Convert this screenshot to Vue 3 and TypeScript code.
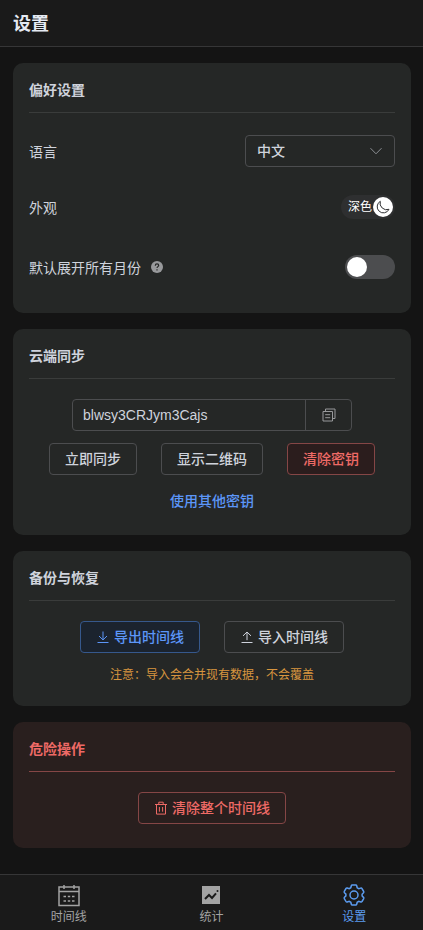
<script setup lang="ts">
import { ref } from 'vue'

type TabId = 'timeline' | 'stats' | 'settings'

const language = ref('zh')
const dark = ref(true)
const expandAll = ref(false)
const secret = ref('blwsy3CRJym3Cajs')
const active = ref<TabId>('settings')

const tabs: { id: TabId; label: string }[] = [
  { id: 'timeline', label: '时间线' },
  { id: 'stats', label: '统计' },
  { id: 'settings', label: '设置' },
]
</script>

<template>
  <div class="page">
    <header class="header">
      <h1>设置</h1>
    </header>

    <main class="content">
      <section class="card">
        <h2>偏好设置</h2>
        <div class="rows">
          <div class="row first">
            <label for="language">语言</label>
            <div class="select">
              <select id="language" v-model="language">
                <option value="zh">中文</option>
                <option value="en">English</option>
              </select>
              <svg viewBox="0 0 14 14" aria-hidden="true"><path d="M1.500 4.200 7 9.800l5.500-5.600" /></svg>
            </div>
          </div>
          <div class="row">
            <label for="appearance">外观</label>
            <div class="theme">
              <input id="appearance" v-model="dark" type="checkbox" role="switch" />
              <span class="theme-text">{{ dark ? '深色' : '浅色' }}</span>
              <span class="theme-knob">
                <svg viewBox="0 0 14 14" aria-hidden="true">
                  <path d="M4.300 1.300A6.200 6.200 0 1 0 13 9.300 6.600 6.600 0 0 1 4.300 1.300Z" />
                </svg>
              </span>
            </div>
          </div>
          <div class="row">
            <div class="label-group">
              <label for="expand">默认展开所有月份</label>
              <svg class="help" viewBox="0 0 12 12" aria-hidden="true">
                <circle cx="6" cy="6" r="6" />
                <path d="M4.300 4.700c0-1.100.7-1.800 1.700-1.800s1.700.7 1.700 1.600c0 1.100-1.700 1.200-1.700 2.500" />
                <path d="M6 8.200v1.200" />
              </svg>
            </div>
            <input id="expand" v-model="expandAll" class="switch" type="checkbox" role="switch" />
          </div>
        </div>
      </section>

      <section class="card">
        <h2>云端同步</h2>
        <div class="body sync">
          <div class="key">
            <input v-model="secret" type="text" aria-label="密钥" />
            <button type="button" aria-label="复制">
              <svg viewBox="0 0 14 14" aria-hidden="true">
                <path d="M1 3.500h9.500V13H1zM3.500 1H13v9.500h-2.500M3.500 1v2.500M3.200 6.700h5M3.200 9.700h5" />
              </svg>
            </button>
          </div>
          <div class="actions">
            <button type="button" class="btn">立即同步</button>
            <button type="button" class="btn">显示二维码</button>
            <button type="button" class="btn danger filled">清除密钥</button>
          </div>
          <button type="button" class="link">使用其他密钥</button>
        </div>
      </section>

      <section class="card">
        <h2>备份与恢复</h2>
        <div class="body backup">
          <div class="actions">
            <button type="button" class="btn primary">
              <svg viewBox="0 0 14 14" aria-hidden="true"><path d="M7 1.500v8.200M3 6l4 3.900L11 6M1.500 12.500h11" /></svg>
              导出时间线
            </button>
            <button type="button" class="btn">
              <svg viewBox="0 0 14 14" aria-hidden="true"><path d="M7 10.200V2M3 5.900 7 2l4 3.900M1.500 12.500h11" /></svg>
              导入时间线
            </button>
          </div>
          <p class="note">注意：导入会合并现有数据，不会覆盖</p>
        </div>
      </section>

      <section class="card danger-zone">
        <h2>危险操作</h2>
        <div class="body">
          <button type="button" class="btn danger">
            <svg viewBox="0 0 14 14" aria-hidden="true">
              <path d="M1 3.500h12M2.500 3.500v9.600h9V3.500M4.800 3.300V1.200h4.400v2.100M5.400 6v4.700M8.600 6v4.700" />
            </svg>
            清除整个时间线
          </button>
        </div>
      </section>
    </main>

    <nav class="tabs">
      <button
        v-for="tab in tabs"
        :key="tab.id"
        type="button"
        :class="['tab', { active: active === tab.id }]"
        @click="active = tab.id"
      >
        <svg v-if="tab.id === 'timeline'" viewBox="0 0 24 24" aria-hidden="true">
          <path d="M2 4h20v18.500H2zM2 8.500h20M7 2v4M17 2v4M6.500 13.500H9M10.800 13.500h2.400M15 13.500h2.500M6.500 18H9M10.800 18h2.400M15 18h2.500" />
        </svg>
        <svg v-else-if="tab.id === 'stats'" viewBox="0 0 24 24" aria-hidden="true">
          <path class="solid" d="M3 3h18v18H3z" />
          <path class="trend" d="m6 16 4-4 3 3 4-4.700" />
          <circle class="peak" cx="18.500" cy="8" r="1" />
        </svg>
        <svg v-else viewBox="0 0 24 24" aria-hidden="true">
          <path d="M10.200 2h3.600q.7 0 .9.800l.5 2 1.600.9 2-.6q.8-.2 1.200.5l1.700 2.900q.4.700-.2 1.300l-1.400 1.400v1.800l1.400 1.400q.6.600.2 1.300L20 18.500q-.4.700-1.200.5l-2-.6-1.600.9-.5 2q-.2.800-.9.800h-3.600q-.7 0-.9-.8l-.5-2-1.600-.9-2 .6q-.8.200-1.200-.5l-1.700-2.900q-.4-.7.2-1.300l1.400-1.400v-1.800L2.500 9.700q-.6-.6-.2-1.300L4 5.500q.4-.7 1.200-.5l2 .6 1.600-.9.500-2q.2-.7.900-.7z" />
          <circle cx="12" cy="12" r="4" />
        </svg>
        <span>{{ tab.label }}</span>
      </button>
    </nav>
  </div>
</template>

<style>
body {
  margin: 0;
  background: #141414;
}
</style>

<style scoped>
.page {
  display: flex;
  flex-direction: column;
  min-height: 100vh;
  box-sizing: border-box;
  color: #cfd3dc;
  font-family: "Liberation Sans", "Noto Sans CJK SC", sans-serif;
  font-size: 14px;
  line-height: 22px;
}

button,
input,
select {
  box-sizing: border-box;
  margin: 0;
  font: inherit;
  color: inherit;
}

button {
  cursor: pointer;
}

svg {
  fill: none;
  stroke: currentColor;
}

.header {
  padding: 12px 13px 10px;
  background: #1a1a1a;
  border-bottom: 1px solid #363637;
}

h1 {
  margin: 0;
  font-size: 18px;
  line-height: 24px;
  color: #e5eaf3;
}

.content {
  flex: 1;
  display: flex;
  flex-direction: column;
  gap: 16px;
  padding: 16px 12px 26px 13px;
}

.card {
  padding: 16px;
  border-radius: 10px;
  background: #252726;
}

h2 {
  margin: 0;
  padding-bottom: 11px;
  border-bottom: 1px solid #3a3c3b;
  font-size: 14px;
  line-height: 22px;
}

.rows {
  padding-top: 12px;
}

.row {
  display: flex;
  align-items: center;
  justify-content: space-between;
  min-height: 60px;
}

.row.first {
  min-height: 52px;
}

.row label {
  line-height: 20px;
  padding-top: 2px;
}

.label-group {
  display: flex;
  align-items: center;
  gap: 10px;
}

.help {
  width: 12px;
  height: 12px;
}

.help circle {
  fill: #98999b;
  stroke: none;
}

.help path {
  stroke: #252726;
  stroke-width: 1.2;
}

.select {
  position: relative;
  width: 150px;
}

.select select {
  display: block;
  width: 100%;
  height: 32px;
  padding: 0 32px 0 11px;
  appearance: none;
  border: 1px solid #4c4d4f;
  border-radius: 4px;
  background: transparent;
  font-weight: 500;
}

.select option {
  background: #252726;
}

.select svg {
  position: absolute;
  top: 9px;
  right: 12px;
  width: 14px;
  height: 14px;
  color: #8d9095;
  pointer-events: none;
}

.theme {
  position: relative;
  display: flex;
  align-items: center;
  justify-content: space-between;
  box-sizing: border-box;
  width: 54px;
  height: 24px;
  padding: 0 2px 0 7px;
  border-radius: 12px;
  background: #2e2f30;
  color: #fff;
  font-size: 12px;
}

.theme input {
  position: absolute;
  inset: 0;
  width: 100%;
  height: 100%;
  opacity: 0;
  cursor: pointer;
}

.theme-knob {
  display: grid;
  place-items: center;
  width: 20px;
  height: 20px;
  border-radius: 50%;
  background: #fff;
  color: #303133;
}

.theme-knob svg {
  width: 14px;
  height: 14px;
}

.switch {
  display: flex;
  align-items: center;
  width: 50px;
  height: 24px;
  padding: 2px;
  appearance: none;
  border-radius: 12px;
  background: #4c4d4f;
  cursor: pointer;
}

.switch::before {
  content: "";
  width: 20px;
  height: 20px;
  border-radius: 50%;
  background: #fff;
}

.switch:checked {
  justify-content: flex-end;
  background: #409eff;
}

.body {
  display: flex;
  flex-direction: column;
  align-items: center;
  gap: 12px;
  padding: 20px 0 8px;
}

.body.sync,
.body.backup {
  padding-bottom: 4px;
}

.key {
  display: flex;
  box-sizing: border-box;
  width: 280px;
  max-width: 100%;
  height: 32px;
  border: 1px solid #4c4d4f;
  border-radius: 4px;
}

.key input {
  flex: 1;
  min-width: 0;
  padding: 0 10px;
  border: 0;
  background: transparent;
}

.key button {
  display: grid;
  place-items: center;
  width: 46px;
  padding: 0;
  border: 0;
  border-left: 1px solid #4c4d4f;
  background: transparent;
  color: #98999b;
}

.key svg {
  width: 14px;
  height: 14px;
}

.actions {
  display: flex;
  flex-wrap: wrap;
  justify-content: center;
  gap: 12px 24px;
}

.btn {
  display: flex;
  align-items: center;
  justify-content: center;
  gap: 4px;
  height: 32px;
  padding: 0 15px;
  border: 1px solid #4c4d4f;
  border-radius: 4px;
  background: transparent;
  font-weight: 500;
}

.btn svg {
  width: 14px;
  height: 14px;
}

.btn.primary {
  border-color: #36588c;
  background: #1b232e;
  color: #5c96f8;
}

.btn.danger {
  border-color: #854646;
  color: #ee6a66;
}

.btn.filled {
  background: #2b1d1d;
}

.link {
  height: 28px;
  padding: 0;
  border: 0;
  background: transparent;
  color: #5c96f8;
  font-weight: 500;
}

.note {
  margin: 0;
  font-size: 12px;
  line-height: 21px;
  color: #d7953f;
}

.danger-zone {
  background: #291f1e;
}

.danger-zone h2 {
  border-bottom-color: #854646;
  color: #ee6a66;
}

.tabs {
  position: sticky;
  bottom: 0;
  display: grid;
  grid-template-columns: repeat(3, 1fr);
  gap: 5px;
  border-top: 1px solid #363637;
  background: #1a1a1a;
}

.tab {
  display: flex;
  flex-direction: column;
  align-items: center;
  gap: 1px;
  padding: 8px 0 4px;
  border: 0;
  background: transparent;
  color: #a3a3a3;
  font-size: 12px;
  line-height: 18px;
}

.tab svg {
  width: 24px;
  height: 24px;
  stroke-width: 1.5;
}

.tab .solid {
  fill: currentColor;
  stroke: none;
}

.tab .trend {
  stroke: #1a1a1a;
  stroke-width: 2;
}

.tab .peak {
  fill: #1a1a1a;
  stroke: none;
}

.tab.active {
  color: #5c9cf0;
}
</style>
